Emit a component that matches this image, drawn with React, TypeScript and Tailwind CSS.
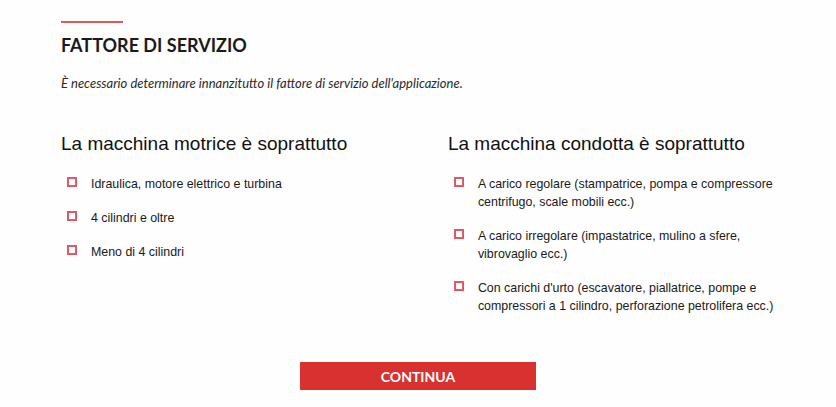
import React from "react"

type Item = { label: string }

const motrice: Item[] = [
  { label: "Idraulica, motore elettrico e turbina" },
  { label: "4 cilindri e oltre" },
  { label: "Meno di 4 cilindri" },
]

const condotta: Item[] = [
  { label: "A carico regolare (stampatrice, pompa e compressore centrifugo, scale mobili ecc.)" },
  { label: "A carico irregolare (impastatrice, mulino a sfere, vibrovaglio ecc.)" },
  { label: "Con carichi d'urto (escavatore, piallatrice, pompe e compressori a 1 cilindro, perforazione petrolifera ecc.)" },
]

const CheckItem: React.FC<Item> = ({ label }) => {
  return (
    <li className="flex items-start">
      <span className="mt-[2px] ml-[6px] mr-[14px] h-[10px] w-[10px] shrink-0 border-2 border-[#de5a66]" />
      <span className="text-[12.4px] leading-[18px] text-[#1a1a1a]">{label}</span>
    </li>
  )
}

const Column: React.FC<{ title: string; items: Item[]; className?: string }> = ({ title, items, className }) => {
  return (
    <div className={className}>
      <h3 className="text-[19px] leading-[22px] text-[#111]">{title}</h3>
      <ul className="mt-[20px] flex flex-col gap-[16px]">
        {items.map((it) => (
          <CheckItem key={it.label} label={it.label} />
        ))}
      </ul>
    </div>
  )
}

const App = () => {
  return (
    <div className="min-h-[407px] w-[836px] bg-[#fefefe] px-[61px] pt-[21px] font-['Liberation_Sans',Arial,sans-serif]">
      <div className="h-[2px] w-[62px] bg-[#dc5a5a]" />
      <h2 className="mt-[11px] font-['Lato',sans-serif] text-[18px] font-bold leading-[23px] text-[#1a1a1a]">
        FATTORE DI SERVIZIO
      </h2>
      <p className="mt-[18px] font-['Lato',sans-serif] text-[13px] italic leading-[16px] text-[#2a2a2a]">
        È necessario determinare innanzitutto il fattore di servizio dell'applicazione.
      </p>

      <div className="mt-[42px] flex items-start">
        <Column title="La macchina motrice è soprattutto" items={motrice} className="w-[388px]" />
        <Column title="La macchina condotta è soprattutto" items={condotta} className="w-[328px]" />
      </div>

      <div className="mt-[47px] flex justify-center">
        <button className="h-[28px] w-[236px] bg-[#d8312f] font-['Lato',sans-serif] text-[14px] font-bold text-white">
          CONTINUA
        </button>
      </div>
    </div>
  )
}

export default App
